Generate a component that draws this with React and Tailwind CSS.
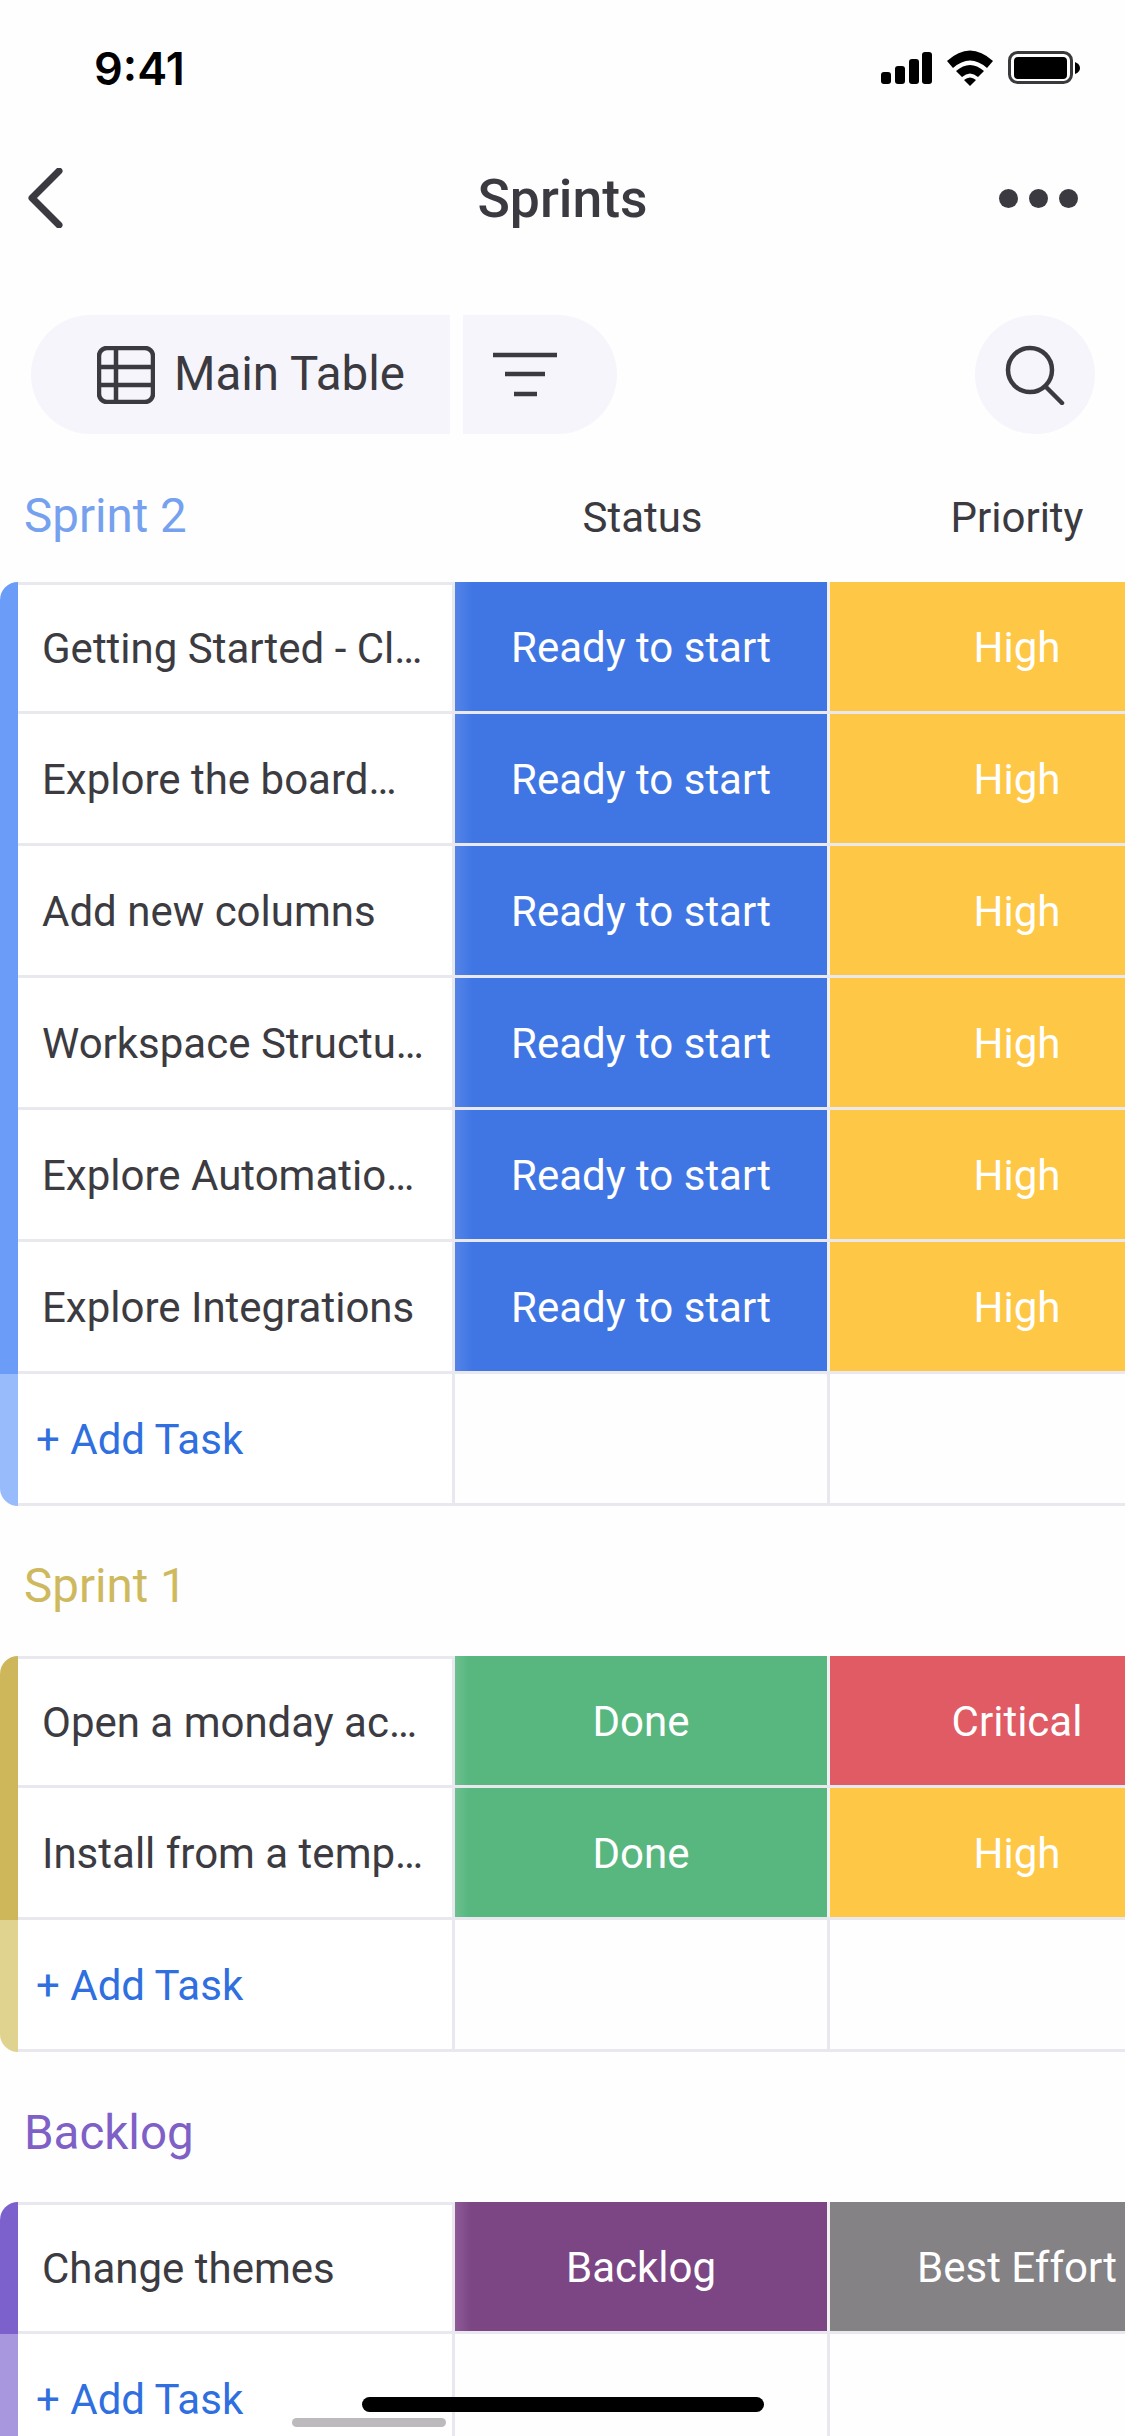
const C = {
  blue: "bg-[linear-gradient(90deg,#5483e6,#3f76e4_18px)]",
  yellow: "bg-[#fec745]",
  green: "bg-[linear-gradient(90deg,#6cc08f,#57b77f_14px)]",
  red: "bg-[#e05b63]",
  purple: "bg-[linear-gradient(90deg,#8d5a96,#7c4685_16px)]",
  gray: "bg-[#848285]",
};

function Row({ name, status, statusBg, pri, priBg, first }) {
  return (
    <div className="flex h-[132px] border-b-[3px] border-[#e9e8ee]">
      <div className={`w-[437px] shrink-0 flex items-center pl-[24px] bg-white text-[42px] text-[#3c3b41] whitespace-nowrap border-r-[3px] border-[#e9e8ee] ${first ? "border-t-[3px]" : "pt-[2px]"}`}>
        {name}
      </div>
      <div className={`w-[372px] shrink-0 flex items-center justify-center pt-[2px] text-[42px] text-white ${statusBg}`}>{status}</div>
      <div className="w-[3px] shrink-0 bg-[#f1f0f2]" />
      <div className={`w-[372px] shrink-0 flex items-center justify-center pt-[2px] pl-[2px] text-[42px] text-white whitespace-nowrap ${priBg}`}>{pri}</div>
    </div>
  );
}

function AddRow() {
  return (
    <div className="flex h-[132px] border-b-[3px] border-[#e9e8ee]">
      <div className="w-[437px] shrink-0 flex items-center pl-[18px] pt-[2px] bg-white text-[42px] text-[#2f6fe0] border-r-[3px] border-[#e9e8ee]">+ Add Task</div>
      <div className="w-[372px] shrink-0" />
      <div className="w-[3px] shrink-0 bg-[#e9e8ee]" />
      <div className="w-[372px] shrink-0" />
    </div>
  );
}

function Group({ strong, light, rows }) {
  return (
    <div className="flex">
      <div className="w-[18px] shrink-0 flex flex-col rounded-l-[18px] overflow-hidden">
        <div className={`flex-1 ${strong}`} />
        <div className={`h-[132px] ${light}`} />
      </div>
      <div className="flex-1">
        {rows.map((r, i) => (
          <Row key={i} {...r} first={i === 0} />
        ))}
        <AddRow />
      </div>
    </div>
  );
}

const rs = (name) => ({ name, status: "Ready to start", statusBg: C.blue, pri: "High", priBg: C.yellow });

export default function App() {
  return (
    <div className="relative w-[1125px] h-[2436px] overflow-hidden bg-[#fefefe] font-['Roboto',sans-serif]">
      {/* status bar */}
      <div className="h-[136px] flex items-center justify-between pl-[94px] pr-[44px]">
        <span className="font-['Inter',sans-serif] text-[45px] font-semibold text-black leading-none">9:41</span>
        <svg width="200" height="40" viewBox="882 49 200 40" fill="#000">
          <rect x="882" y="73" width="10" height="12" rx="3" />
          <rect x="896" y="67" width="10" height="18" rx="3" />
          <rect x="910" y="60" width="10" height="25" rx="3" />
          <rect x="923" y="53" width="10" height="32" rx="3" />
          <path d="M948 62 Q971 41 994 62 L988 69 Q971 54 954 69 Z" />
          <path d="M957 72 Q971 60 985 72 L979 78 Q971 71 963 78 Z" />
          <path d="M965 81 Q971 76 977 81 L971 87 Z" />
          <rect x="1010.5" y="53.5" width="62" height="30" rx="8" fill="none" stroke="#3a3a3c" strokeWidth="3" />
          <rect x="1015" y="58" width="53" height="22" rx="4" />
          <path d="M1076 63 Q1081 65 1081 69 Q1081 73 1076 75 Z" />
        </svg>
      </div>

      {/* nav bar */}
      <div className="h-[124px] grid grid-cols-[1fr_auto_1fr] items-center">
        <div className="pl-[28px]">
          <svg width="36" height="60" viewBox="0 0 36 60" fill="none" stroke="#3b3a40" strokeWidth="7" strokeLinecap="round" strokeLinejoin="round">
            <path d="M31 3 L4 30 L31 57" />
          </svg>
        </div>
        <div className="text-[53.5px] font-medium text-[#3b3a40] leading-none pt-[1px]">Sprints</div>
        <div className="flex justify-end gap-[11px] pr-[47px]">
          <span className="w-[19px] h-[19px] rounded-full bg-[#3b3a40]" />
          <span className="w-[19px] h-[19px] rounded-full bg-[#3b3a40]" />
          <span className="w-[19px] h-[19px] rounded-full bg-[#3b3a40]" />
        </div>
      </div>

      {/* toolbar */}
      <div className="mt-[55px] h-[119px] flex items-stretch pl-[31px] pr-[30px]">
        <div className="w-[419px] flex items-center gap-[19px] pl-[66px] rounded-l-[60px] bg-[#f5f5fb]">
          <svg width="58" height="58" viewBox="0 0 58 58" fill="none" stroke="#3b3a40" strokeWidth="4.5">
            <rect x="2" y="2" width="54" height="54" rx="8" />
            <path d="M2 21 H56 M2 39 H56 M19 2 V56" />
          </svg>
          <span className="text-[47.5px] text-[#3b3a40] leading-none">Main Table</span>
        </div>
        <div className="ml-[13px] w-[154px] flex flex-col justify-center rounded-r-[60px] bg-[#f5f5fb] pl-[30px]">
          <svg width="64" height="46" viewBox="0 0 64 46" stroke="#3b3a40" strokeWidth="4.5">
            <path d="M0 3 H64 M12 22 H52 M21 42 H44" />
          </svg>
        </div>
        <div className="ml-auto w-[120px] flex items-center justify-center rounded-full bg-[#f5f5fb]">
          <svg width="60" height="60" viewBox="0 0 60 60" fill="none" stroke="#3b3a40" strokeWidth="4.5" strokeLinecap="round">
            <circle cx="25" cy="25" r="22" />
            <path d="M41 42 L57 58" />
          </svg>
        </div>
      </div>

      {/* Sprint 2 header */}
      <div className="h-[148px] pt-[18px] flex items-center">
        <div className="w-[455px] shrink-0 pl-[24px] text-[47.5px] text-[#76a1ee]">Sprint 2</div>
        <div className="w-[375px] shrink-0 text-center text-[42px] text-[#3b3a40]">Status</div>
        <div className="w-[372px] shrink-0 pl-[2px] text-center text-[42px] text-[#3b3a40]">Priority</div>
      </div>

      <Group
        strong="bg-[#6a9cf8]"
        light="bg-[#98bbfb]"
        rows={[
          rs("Getting Started - Cl…"),
          rs("Explore the board…"),
          rs("Add new columns"),
          rs("Workspace Structu…"),
          rs("Explore Automatio…"),
          rs("Explore Integrations"),
        ]}
      />

      <div className="h-[150px] pt-[12px] pl-[24px] flex items-center text-[47.5px] text-[#cfb95f]">Sprint 1</div>

      <Group
        strong="bg-[#cdb75a]"
        light="bg-[#e0d28f]"
        rows={[
          { name: "Open a monday ac…", status: "Done", statusBg: C.green, pri: "Critical", priBg: C.red },
          { name: "Install from a temp…", status: "Done", statusBg: C.green, pri: "High", priBg: C.yellow },
        ]}
      />

      <div className="h-[150px] pt-[14px] pl-[24px] flex items-center text-[47.5px] text-[#7e60c6]">Backlog</div>

      <Group
        strong="bg-[#7c60cc]"
        light="bg-[#a896df]"
        rows={[{ name: "Change themes", status: "Backlog", statusBg: C.purple, pri: "Best Effort", priBg: C.gray }]}
      />

      {/* home indicators */}
      <div className="absolute left-[362px] top-[2397px] w-[402px] h-[15px] rounded-full bg-black" />
      <div className="absolute left-[292px] top-[2418px] w-[154px] h-[9px] rounded-full bg-[#bcbabd]" />
    </div>
  );
}
